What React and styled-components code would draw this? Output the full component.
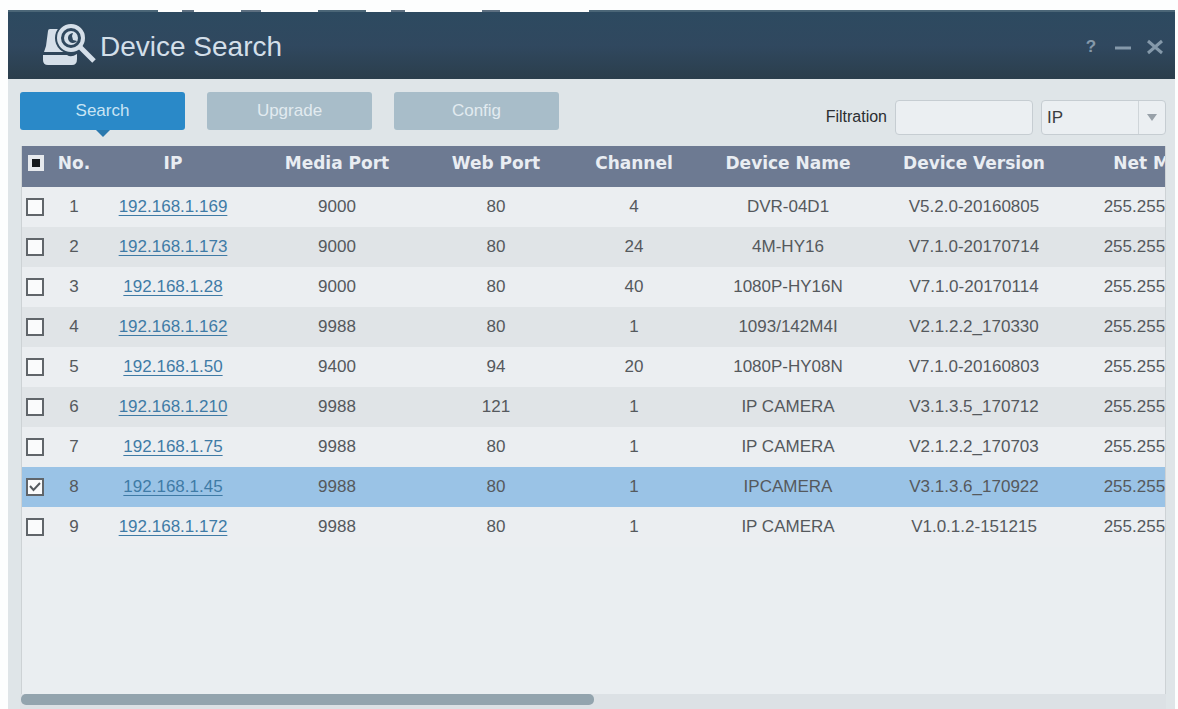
import { useState } from 'react';
import styled, { createGlobalStyle } from 'styled-components';

const GlobalStyle = createGlobalStyle`
  * {
    box-sizing: border-box;
  }
  html, body, #root {
    height: 100%;
  }
  body {
    margin: 0;
    background: #fdfefe;
    font-family: 'Liberation Sans', Arial, sans-serif;
    font-size: 17px;
    color: #55595d;
    overflow: hidden;
  }
  button, input, select {
    font: inherit;
  }
`;

const Window = styled.main`
  display: flex;
  flex-direction: column;
  height: 100%;
  padding: 10px 3px 0 8px;
`;

// broken line of whatever lies behind the window
const TopEdge = styled.div`
  flex: none;
  height: 2px;
  background: linear-gradient(
    90deg,
    #4b6677 150px, transparent 150px 174px,
    #5d6f80 174px 186px, transparent 186px 233px,
    #5d6f80 233px 253px, transparent 253px 310px,
    #4b6677 310px 358px, transparent 358px 383px,
    #5d6f80 383px 397px, transparent 397px 474px,
    #5d6f80 474px 492px, transparent 492px 581px,
    #4b6677 581px
  );
`;

const TitleBar = styled.header`
  display: flex;
  align-items: center;
  flex: none;
  height: 67px;
  padding: 2px 10px 0 34px;
  background: linear-gradient(#2d4a60, #30485f 50%, #2b3e4c);
`;

const Logo = styled.svg`
  flex: none;
  width: 56px;
  height: 44px;
  margin-right: 2px;
  margin-bottom: 4px;
`;

const Title = styled.h1`
  flex: 1;
  margin: 0;
  font-size: 28px;
  line-height: 32px;
  font-weight: 400;
  color: #d3dfe9;
`;

const WindowButtons = styled.div`
  display: flex;
  gap: 12px;
`;

const WindowButton = styled.button`
  display: flex;
  justify-content: center;
  align-items: center;
  width: 20px;
  height: 20px;
  padding: 0;
  border: 0;
  background: none;
  color: #8599aa;
  font-weight: 700;
`;

const Body = styled.section`
  display: flex;
  flex-direction: column;
  flex: 1;
  min-height: 0;
  padding: 0 9px 0 12px;
  background: #dfe5e8;
`;

const Toolbar = styled.div`
  display: flex;
  justify-content: space-between;
  flex: none;
  height: 67px;
`;

const Tabs = styled.nav`
  display: flex;
  gap: 22px;
  padding-top: 13px;
`;

const Tab = styled.button`
  position: relative;
  width: 165px;
  height: 38px;
  padding: 0;
  border: 0;
  border-radius: 3px;
  background: ${(pr) => (pr.$active ? '#2a89c8' : '#a8bdc9')};
  color: ${(pr) => (pr.$active ? '#c9e4f4' : '#e2ebf0')};

  &::after {
    content: '';
    display: ${(pr) => (pr.$active ? 'block' : 'none')};
    position: absolute;
    top: 100%;
    left: 50%;
    margin-left: -7px;
    border: 7px solid transparent;
    border-bottom: 0;
    border-top-color: #2a79ae;
  }
`;

const Filter = styled.div`
  display: flex;
  align-items: center;
  gap: 8px;
  padding-top: 9px;
`;

const FilterLabel = styled.label`
  font-size: 16px;
  color: #2b2e31;
`;

const FilterInput = styled.input`
  width: 138px;
  height: 35px;
  padding: 0 6px;
  border: 1px solid #c6cdd2;
  border-radius: 4px;
  background: #ebeff2;
  color: #2b2e31;
`;

const SelectBox = styled.div`
  display: grid;
  width: 125px;
  height: 35px;
  border: 1px solid #c6cdd2;
  border-radius: 4px;
  background: #ebeff2;
`;

const FilterSelect = styled.select`
  grid-area: 1 / 1;
  appearance: none;
  width: 100%;
  padding: 0 32px 0 5px;
  border: 0;
  background: none;
  color: #3a3d40;
`;

const SelectArrow = styled.span`
  grid-area: 1 / 1;
  justify-self: end;
  display: flex;
  justify-content: center;
  align-items: center;
  width: 27px;
  border-left: 1px solid #cfd5d9;
  pointer-events: none;
`;

const TableArea = styled.div`
  flex: 1;
  min-height: 0;
  margin-left: 1px;
  border-left: 1px solid #cdd2d5;
  border-right: 1px solid #cdd2d5;
  background: #eaeef1;
  overflow: hidden;
`;

const Table = styled.table`
  table-layout: fixed;
  width: 1218px;
  border-collapse: collapse;
  text-align: center;
`;

const HeadCell = styled.th`
  width: ${(pr) => pr.$width}px;
  height: 41px;
  padding: 0 0 7px;
  background: #6d7a92;
  color: #e9edf2;
  font-family: 'DejaVu Sans', Verdana, sans-serif;
  font-size: 17px;
  font-weight: 700;
  white-space: nowrap;
`;

const Row = styled.tr`
  background: #ebeef1;

  &:nth-child(even) {
    background: #e0e4e7;
  }
  &:has(input:checked) {
    background: #9ac3e6;
  }
`;

const Cell = styled.td`
  height: 40px;
  padding: 0;
  white-space: nowrap;
`;

const IpLink = styled.a`
  color: #3f7ba6;
  text-decoration: underline;
  text-underline-offset: 3px;
`;

const Check = styled.input`
  appearance: none;
  display: block;
  width: 18px;
  height: 18px;
  margin: 0 0 0 4px;
  border: 2px solid #60656a;
  background: #fafbfc center / 14px 14px no-repeat;

  &:checked {
    background-image: url("data:image/svg+xml,%3Csvg xmlns='http://www.w3.org/2000/svg' viewBox='0 0 14 14'%3E%3Cpath d='M2 6l3.500 4L12 3' fill='none' stroke='%23555b60' stroke-width='2'/%3E%3C/svg%3E");
  }
`;

const CheckAll = styled(Check)`
  width: 16px;
  height: 16px;
  margin-left: 6px;
  border: 4px solid #e6e9ed;
  background: #16191d;
`;

const ScrollTrack = styled.div`
  flex: none;
  height: 15px;
  padding: 0 0 4px 1px;
  background: #dce1e5;
`;

const ScrollThumb = styled.div`
  width: 50%;
  height: 11px;
  border-radius: 5px;
  background: #93a4ae;
`;

const columns = [
  { name: 'No.', width: 52 },
  { name: 'IP', width: 146 },
  { name: 'Media Port', width: 182 },
  { name: 'Web Port', width: 136 },
  { name: 'Channel', width: 140 },
  { name: 'Device Name', width: 168 },
  { name: 'Device Version', width: 204 },
  { name: 'Net Mask', width: 164 },
];

const devices = [
  ['192.168.1.169', '9000', '80', '4', 'DVR-04D1', 'V5.2.0-20160805'],
  ['192.168.1.173', '9000', '80', '24', '4M-HY16', 'V7.1.0-20170714'],
  ['192.168.1.28', '9000', '80', '40', '1080P-HY16N', 'V7.1.0-20170114'],
  ['192.168.1.162', '9988', '80', '1', '1093/142M4I', 'V2.1.2.2_170330'],
  ['192.168.1.50', '9400', '94', '20', '1080P-HY08N', 'V7.1.0-20160803'],
  ['192.168.1.210', '9988', '121', '1', 'IP CAMERA', 'V3.1.3.5_170712'],
  ['192.168.1.75', '9988', '80', '1', 'IP CAMERA', 'V2.1.2.2_170703'],
  ['192.168.1.45', '9988', '80', '1', 'IPCAMERA', 'V3.1.3.6_170922'],
  ['192.168.1.172', '9988', '80', '1', 'IP CAMERA', 'V1.0.1.2-151215'],
];

const DeviceLogo = () => (
  <Logo viewBox="0 0 56 44" aria-hidden="true">
    <path d="M6 8q0-2 2-2h10v18l6 5H2l2-6z" fill="#d5dfe9" />
    <path d="M1 32h24q4 3 10-1v5q0 6-5 6H6q-5 0-5-5z" fill="#d5dfe9" />
    <circle cx="29" cy="15" r="16" fill="#2f485d" />
    <path d="M38 24l14 14" stroke="#d5dfe9" strokeWidth="5" />
    <circle cx="29" cy="15" r="12" fill="#30485e" stroke="#d5dfe9" strokeWidth="4" />
    <circle cx="29" cy="15" r="7" fill="#d5dfe9" />
    <path d="M31 10a5 5 0 1 0 4 8l-4-1-1-4z" fill="#30485e" />
  </Logo>
);

const App = () => {
  const [tab, setTab] = useState('Search');
  const [checked, setChecked] = useState([8]);
  const toggle = (no) => setChecked((prev) => (prev.includes(no) ? prev.filter((n) => n !== no) : [...prev, no]));

  return (
    <>
      <GlobalStyle />
      <Window>
        <TopEdge />
        <TitleBar>
          <DeviceLogo />
          <Title>Device Search</Title>
          <WindowButtons>
            <WindowButton aria-label="Help">?</WindowButton>
            <WindowButton aria-label="Minimize">
              <svg width="16" height="16" viewBox="0 0 16 16">
                <path d="M0 9h16" stroke="currentColor" strokeWidth="3" />
              </svg>
            </WindowButton>
            <WindowButton aria-label="Close">
              <svg width="16" height="16" viewBox="0 0 16 16">
                <path d="M1 2l14 12M15 2L1 14" stroke="currentColor" strokeWidth="3" />
              </svg>
            </WindowButton>
          </WindowButtons>
        </TitleBar>
        <Body>
          <Toolbar>
            <Tabs>
              {['Search', 'Upgrade', 'Config'].map((name) => (
                <Tab key={name} $active={tab === name} onClick={() => setTab(name)}>
                  {name}
                </Tab>
              ))}
            </Tabs>
            <Filter>
              <FilterLabel htmlFor="filter">Filtration</FilterLabel>
              <FilterInput id="filter" type="text" />
              <SelectBox>
                <FilterSelect aria-label="Filter by" defaultValue="IP">
                  <option>IP</option>
                  <option>Device Name</option>
                </FilterSelect>
                <SelectArrow>
                  <svg width="10" height="8" viewBox="0 0 10 8">
                    <path d="M0 1h10L5 8z" fill="#98a1a9" />
                  </svg>
                </SelectArrow>
              </SelectBox>
            </Filter>
          </Toolbar>
          <TableArea>
            <Table>
              <thead>
                <tr>
                  <HeadCell $width={26}>
                    <CheckAll type="checkbox" aria-label="Select all" />
                  </HeadCell>
                  {columns.map((col) => (
                    <HeadCell key={col.name} $width={col.width}>
                      {col.name}
                    </HeadCell>
                  ))}
                </tr>
              </thead>
              <tbody>
                {devices.map(([ip, ...rest], i) => (
                  <Row key={ip}>
                    <Cell>
                      <Check type="checkbox" aria-label={`Select ${ip}`} checked={checked.includes(i + 1)} onChange={() => toggle(i + 1)} />
                    </Cell>
                    <Cell>{i + 1}</Cell>
                    <Cell>
                      <IpLink href={`http://${ip}`}>{ip}</IpLink>
                    </Cell>
                    {rest.map((value, n) => (
                      <Cell key={n}>{value}</Cell>
                    ))}
                    <Cell>255.255.255.0</Cell>
                  </Row>
                ))}
              </tbody>
            </Table>
          </TableArea>
          <ScrollTrack>
            <ScrollThumb />
          </ScrollTrack>
        </Body>
      </Window>
    </>
  );
};

export default App;
